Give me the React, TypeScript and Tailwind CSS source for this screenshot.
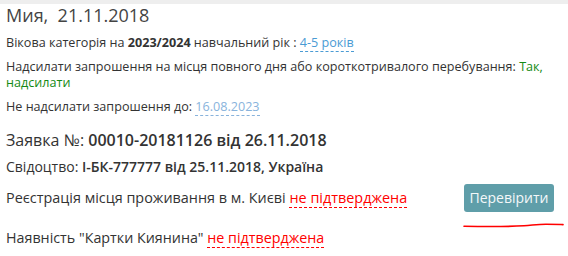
import React from "react";

export default function App() {
  return (
    <div className="w-[568px] h-[256px] bg-white overflow-hidden text-[#333333]" style={{ fontFamily: '"Open Sans", "Noto Sans", sans-serif' }}>
      <div className="h-[4px] bg-[#eeeeee]" />
      <div className="px-[6px]">
        <div className="mt-[1px] text-[18px] leading-[20px] text-[#444444]">Мия,&nbsp; 21.11.2018</div>
        <div className="mt-[10px] text-[12.6px] leading-[16px]">
          Вікова категорія на <b className="font-bold">2023/2024</b> навчальний рік :{" "}
          <span className="text-[#4a9bd4] border-b border-dashed border-[#4a9bd4]">4-5 років</span>
        </div>
        <div className="mt-[8px] text-[12.6px] leading-[16px]">
          Надсилати запрошення на місця повного дня або короткотривалого перебування:{" "}
          <span className="text-[#148a14]">Так, надсилати</span>
        </div>
        <div className="mt-[8px] text-[12.6px] leading-[16px]">
          Не надсилати запрошення до:{" "}
          <span className="text-[#88b3dc] border-b border-dashed border-[#88b3dc]">16.08.2023</span>
        </div>
        <div className="mt-[15px] text-[16px] leading-[20px]">
          Заявка №: <b className="font-semibold">00010-20181126 від 26.11.2018</b>
        </div>
        <div className="mt-[7px] text-[14px] leading-[20px]">
          Свідоцтво: <b className="font-semibold">І-БК-777777 від 25.11.2018, Україна</b>
        </div>
        <div className="mt-[7px] flex items-center h-[28px] text-[14.4px] leading-[20px]">
          <div>
            Реєстрація місця проживання в м. Києві{" "}
            <span className="text-[#ff0000] border-b border-dashed border-[#ff0000]">не підтверджена</span>
          </div>
          <button className="ml-auto mr-[8px] h-[28px] w-[90px] rounded-[3px] bg-[#5f9ea9] text-[#f4f8f9] text-[14px]">
            Перевірити
          </button>
        </div>
        <div className="h-[16px] pl-[456px]">
          <svg width="104" height="16" viewBox="0 0 104 16">
            <path d="M2 14.3 C 20 14.6, 45 14.8, 62 13.8 C 72 13, 76 12.2, 84 12.2 C 92 12.2, 98 12.5, 101 12.6" stroke="#ff0000" strokeWidth="1.6" fill="none" strokeLinecap="round" />
          </svg>
        </div>
        <div className="text-[14.3px] leading-[20px]">
          Наявність "Картки Киянина"{" "}
          <span className="text-[#ff0000] border-b border-dashed border-[#ff0000]">не підтверджена</span>
        </div>
      </div>
    </div>
  );
}
